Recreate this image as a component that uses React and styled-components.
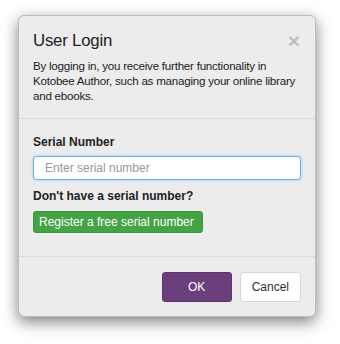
import React from "react";
import styled, { createGlobalStyle } from "styled-components";

const Global = createGlobalStyle`
  html, body { margin: 0; padding: 0; background: #ffffff; }
  body { font-family: "Liberation Sans", Arial, sans-serif; color: #333; }
  * { box-sizing: border-box; }
`;

const Page = styled.div`
  padding: 15px 24px 0 18px;
  width: 340px;
  height: 344px;
`;

const Dialog = styled.div`
  width: 298px;
  background: #ececec;
  border: 1px solid rgba(0, 0, 0, 0.2);
  border-radius: 6px;
  box-shadow: 0 5px 15px rgba(0, 0, 0, 0.5);
  display: flex;
  flex-direction: column;
`;

const Header = styled.div`
  padding: 15px 14px 15px 14px;
  border-bottom: 1px solid #dcdcdc;
`;

const TitleRow = styled.div`
  display: flex;
  justify-content: space-between;
  align-items: flex-start;
`;

const Title = styled.h4`
  margin: 0;
  font-size: 16.8px;
  line-height: 20px;
  letter-spacing: -0.2px;
  font-weight: normal;
  color: #222;
`;

const Close = styled.button`
  border: 0;
  background: none;
  padding: 0;
  margin: 0 1px 0 0;
  font-family: "Liberation Sans", Arial, sans-serif;
  font-size: 21px;
  font-weight: bold;
  line-height: 20px;
  color: #000;
  opacity: 0.2;
  cursor: pointer;
`;

const Desc = styled.p`
  margin: 7px 0 0 0;
  font-size: 11.6px;
  line-height: 15px;
  letter-spacing: -0.24px;
  color: #222;
`;

const Body = styled.div`
  padding: 15px 14px 23px 14px;
  display: flex;
  flex-direction: column;
  align-items: flex-start;
`;

const Label = styled.label`
  font-size: 12px;
  font-weight: bold;
  line-height: 17px;
  color: #222;
  margin-bottom: ${(p) => p.$mb}px;
  margin-top: ${(p) => p.$mt || 0}px;
`;

const Input = styled.input`
  width: 100%;
  height: 24px;
  padding: 0 11px;
  font-family: "Liberation Sans", Arial, sans-serif;
  font-size: 12px;
  border: 1px solid #66afe9;
  border-radius: 3px;
  background: #fff;
  box-shadow: 0 0 3px rgba(102, 175, 233, 0.6);
  outline: none;
  &::placeholder { color: #999; }
`;

const SmallButton = styled.button`
  font-family: "Liberation Sans", Arial, sans-serif;
  font-size: 12px;
  line-height: 18px;
  padding: 1px 5px;
  border: 1px solid #3b963b;
  border-radius: 3px;
  background: #43a345;
  color: #fff;
  width: 170px;
  text-align: left;
  cursor: pointer;
`;

const Footer = styled.div`
  padding: 15px 14px 14px 14px;
  border-top: 1px solid #dcdcdc;
  display: flex;
  justify-content: flex-end;
  gap: 8px;
`;

const FooterButton = styled.button`
  font-family: "Liberation Sans", Arial, sans-serif;
  font-size: 12px;
  line-height: 18px;
  height: 30px;
  padding: 5px 11px;
  min-width: ${(p) => (p.$primary ? "70px" : "0")};
  border-radius: 3px;
  border: 1px solid ${(p) => (p.$primary ? "#5e3470" : "#d6d6d6")};
  background: ${(p) => (p.$primary ? "#6a3f7c" : "#fff")};
  color: ${(p) => (p.$primary ? "#fff" : "#333")};
  cursor: pointer;
`;

export default function App() {
  return (
    <>
      <Global />
      <Page>
        <Dialog>
          <Header>
            <TitleRow>
              <Title>User Login</Title>
              <Close aria-label="Close">×</Close>
            </TitleRow>
            <Desc>
              By logging in, you receive further functionality in<br />
              Kotobee Author, such as managing your online library
              and ebooks.
            </Desc>
          </Header>
          <Body>
            <Label $mb={5}>Serial Number</Label>
            <Input placeholder="Enter serial number" />
            <Label $mt={8} $mb={6}>Don't have a serial number?</Label>
            <SmallButton>Register a free serial number</SmallButton>
          </Body>
          <Footer>
            <FooterButton $primary>OK</FooterButton>
            <FooterButton>Cancel</FooterButton>
          </Footer>
        </Dialog>
      </Page>
    </>
  );
}
